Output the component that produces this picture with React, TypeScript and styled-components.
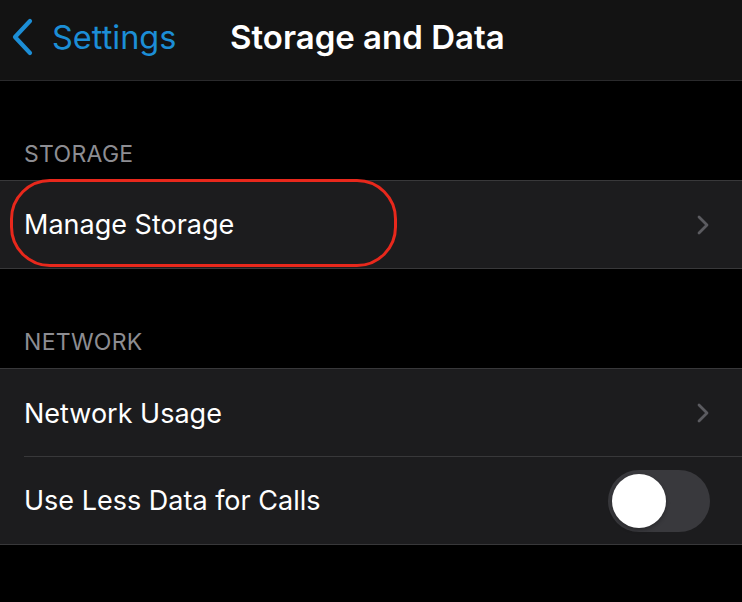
import React from 'react'
import styled, { createGlobalStyle } from 'styled-components'

const GlobalStyle = createGlobalStyle`
    html, body {
        margin: 0;
        padding: 0;
        background: #000;
    }
    body {
        font-family: Inter, "Noto Sans", sans-serif;
        -webkit-font-smoothing: antialiased;
    }
`

const Screen = styled.div`
    width: 742px;
    height: 602px;
    background: #000;
    overflow: hidden;
`

const NavBar = styled.div`
    height: 81px;
    background: #131313;
    border-bottom: 1px solid #2a2a2c;
    display: flex;
    align-items: center;
    box-sizing: border-box;
    padding: 0 0 6px 10px;
`

const BackButton = styled.div`
    display: flex;
    align-items: center;
    gap: 18px;
    color: #1c8ed6;
    font-size: 32.5px;
    width: 220px;
`

const Title = styled.div`
    color: #fff;
    font-size: 33px;
    font-weight: 600;
`

const SectionHeader = styled.div`
    color: #8d8d92;
    font-size: 23px;
    padding: 0 24px 12px;
    height: 99px;
    box-sizing: border-box;
    display: flex;
    align-items: flex-end;
    letter-spacing: 0.3px;
`

const Group = styled.div`
    background: #1c1c1e;
    border-top: 1px solid #38383a;
    border-bottom: 1px solid #38383a;
`

const Row = styled.div<{ $divider?: boolean }>`
    position: relative;
    height: ${(p) => (p.$divider ? 88 : 87)}px;
    display: flex;
    align-items: center;
    padding: 0 32px 0 24px;
    box-sizing: border-box;
    color: #fff;
    font-size: 27px;
    &::after {
        content: '';
        display: ${(p) => (p.$divider ? 'block' : 'none')};
        position: absolute;
        left: 24px;
        right: 0;
        bottom: 0;
        height: 1px;
        background: #38383a;
    }
`

const Label = styled.span`
    flex: 1;
`

const Highlight = styled.div`
    position: absolute;
    left: 10px;
    top: -2px;
    width: 387px;
    height: 88px;
    border: 3px solid #e8281c;
    border-radius: 40px;
    box-sizing: border-box;
    pointer-events: none;
`

const Track = styled.div<{ $on?: boolean }>`
    width: 102px;
    height: 62px;
    border-radius: 31px;
    background: ${(p) => (p.$on ? '#34c759' : '#39393d')};
    display: flex;
    align-items: center;
    padding: 0 4px;
    box-sizing: border-box;
    justify-content: ${(p) => (p.$on ? 'flex-end' : 'flex-start')};
`

const Knob = styled.div`
    width: 54px;
    height: 54px;
    border-radius: 50%;
    background: #fff;
    box-shadow: 0 2px 4px rgba(0, 0, 0, 0.3);
`

const BackChevron = () => (
    <svg width="24" height="38" viewBox="0 0 24 38">
        <path d="M20 3 L5 19 L20 35" fill="none" stroke="#1c8ed6" strokeWidth="4.2" strokeLinecap="round" strokeLinejoin="round" />
    </svg>
)

const Chevron = () => (
    <svg width="14" height="20" viewBox="0 0 14 20">
        <path d="M3 2 L11 10 L3 18" fill="none" stroke="#5b5b60" strokeWidth="2.8" strokeLinecap="round" strokeLinejoin="round" />
    </svg>
)

const Switch = (props: { on?: boolean }) => (
    <Track $on={props.on}>
        <Knob />
    </Track>
)

export default function App() {
    return (
        <Screen>
            <GlobalStyle />
            <NavBar>
                <BackButton>
                    <BackChevron />
                    <span>Settings</span>
                </BackButton>
                <Title>Storage and Data</Title>
            </NavBar>

            <SectionHeader>STORAGE</SectionHeader>
            <Group>
                <Row>
                    <Label>Manage Storage</Label>
                    <Chevron />
                    <Highlight />
                </Row>
            </Group>

            <SectionHeader>NETWORK</SectionHeader>
            <Group>
                <Row $divider>
                    <Label>Network Usage</Label>
                    <Chevron />
                </Row>
                <Row>
                    <Label>Use Less Data for Calls</Label>
                    <Switch />
                </Row>
            </Group>
        </Screen>
    )
}
